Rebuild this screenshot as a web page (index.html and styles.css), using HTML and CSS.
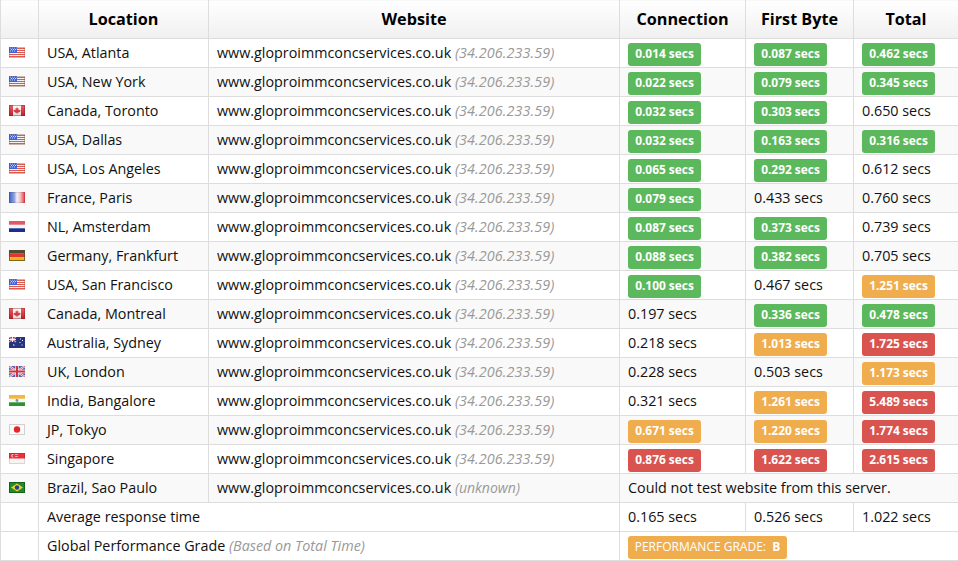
FILE: index.html
```html
<!DOCTYPE html>
<html lang="en">
<head>
<meta charset="utf-8">
<title>Website speed test</title>
<link rel="stylesheet" href="styles.css">
</head>
<body>
<svg class="defs" width="0" height="0" aria-hidden="true">
  <defs>
    <linearGradient id="gloss" x1="0" y1="0" x2="0" y2="1">
      <stop offset="0" stop-color="#fff" stop-opacity=".3"/>
      <stop offset=".5" stop-color="#fff" stop-opacity=".12"/>
      <stop offset="1" stop-color="#000" stop-opacity=".12"/>
    </linearGradient>
    <linearGradient id="sheen" x1="0" y1="0" x2="1" y2="0">
      <stop offset="0" stop-color="#3f5fc8"/>
      <stop offset=".33" stop-color="#8ea2de"/>
      <stop offset=".5" stop-color="#f1f2f8"/>
      <stop offset=".72" stop-color="#f6b9bc"/>
      <stop offset="1" stop-color="#e5343c"/>
    </linearGradient>
    <symbol id="f-us" viewBox="0 0 16 11">
      <rect width="16" height="11" fill="#f6f0f0"/>
      <path d="M0 1.500h16M0 3.500h16M0 5.500h16M0 7.500h16M0 9.500h16" stroke="#dc5a50" stroke-width="1"/>
      <rect width="8" height="6" fill="#3f63dc"/>
      <path d="M1 1h1M3 1h1M5 1h1M7 1h.6M2 2.500h1M4 2.500h1M6 2.500h1M1 4h1M3 4h1M5 4h1" stroke="#eef1ff" stroke-width=".8"/>
      <rect x=".5" y=".5" width="15" height="10" fill="none" stroke="#7a4a3a" stroke-opacity=".35"/>
    </symbol>
    <symbol id="f-ca" viewBox="0 0 16 11">
      <rect width="16" height="11" fill="#f8f2f2"/>
      <rect width="4" height="11" fill="#d2232c"/>
      <rect x="12" width="4" height="11" fill="#d2232c"/>
      <path d="M8 2l.8 1.400.8-.4-.3 2 1-.6.400.8 1-.1-.5 1.400-2 1.300H8.300V9h-.6V7.800H6.800l-2-1.300-.5-1.400 1 .1.400-.8 1 .6-.3-2 .8.400z" fill="#d2232c"/>
      <rect width="16" height="11" fill="url(#gloss)"/>
      <rect x=".5" y=".5" width="15" height="10" fill="none" stroke="#8a1a20" stroke-opacity=".4"/>
    </symbol>
    <symbol id="f-fr" viewBox="0 0 16 11">
      <rect width="16" height="11" fill="url(#sheen)"/>
      <rect x=".5" y=".5" width="15" height="10" fill="none" stroke="#000" stroke-opacity=".1"/>
    </symbol>
    <symbol id="f-nl" viewBox="0 0 16 11">
      <rect width="16" height="11" fill="#f4f4f8"/>
      <rect width="16" height="3.700" fill="#e0434c"/>
      <rect y="7.300" width="16" height="3.700" fill="#1a2f8a"/>
      <rect width="16" height="6" fill="#fff" opacity=".12"/>
    </symbol>
    <symbol id="f-de" viewBox="0 0 16 11">
      <rect width="16" height="3.700" fill="#4a4a44"/>
      <rect y="3.700" width="16" height="3.600" fill="#e0372a"/>
      <rect y="7.300" width="16" height="3.700" fill="#f2b418"/>
      <rect x=".5" y=".5" width="15" height="10" fill="none" stroke="#5a4e20" stroke-opacity=".75"/>
    </symbol>
    <symbol id="f-au" viewBox="0 0 16 11">
      <rect width="16" height="11" fill="#26337e"/>
      <path d="M0 0l7 5M7 0L0 5" stroke="#e8a0a8" stroke-width="1.200"/>
      <path d="M3.500 0v5M0 2.500h7" stroke="#f0f0f0" stroke-width="1.200"/>
      <path d="M11 2h1M13 3.500h1M10.500 5.500h1M12.500 8h1M4 8h1.500" stroke="#f4f4fb" stroke-width="1.200"/>
    </symbol>
    <symbol id="f-uk" viewBox="0 0 16 11">
      <rect width="16" height="11" fill="#5563b0"/>
      <path d="M0 0l16 11M16 0L0 11" stroke="#f2f2f6" stroke-width="2.200"/>
      <path d="M0 0l16 11M16 0L0 11" stroke="#d2404c" stroke-width=".8"/>
      <path d="M8 0v11M0 5.500h16" stroke="#f2f2f6" stroke-width="3.400"/>
      <path d="M8 0v11M0 5.500h16" stroke="#d2323f" stroke-width="2"/>
    </symbol>
    <symbol id="f-in" viewBox="0 0 16 11">
      <rect width="16" height="11" fill="#f8f8f4"/>
      <rect width="16" height="3.700" fill="#f6b445"/>
      <rect y="7.300" width="16" height="3.700" fill="#2d9231"/>
      <circle cx="8" cy="5.500" r="1.400" fill="#7f8fc0"/>
    </symbol>
    <symbol id="f-jp" viewBox="0 0 16 11">
      <rect width="16" height="11" fill="#fafafa"/>
      <circle cx="8" cy="5.500" r="3.200" fill="#e8242b"/>
      <rect x=".5" y=".5" width="15" height="10" fill="none" stroke="#000" stroke-opacity=".16"/>
    </symbol>
    <symbol id="f-sg" viewBox="0 0 16 11">
      <rect width="16" height="11" fill="#f7f3f3"/>
      <rect width="16" height="5.500" fill="#e8313b"/>
      <circle cx="4" cy="2.800" r="1.700" fill="#f7e6e6"/>
      <circle cx="4.800" cy="2.800" r="1.500" fill="#e8313b"/>
      <path d="M6 1.500h3M6 3.500h3" stroke="#f7d0d0" stroke-width=".7"/>
      <rect x=".5" y=".5" width="15" height="10" fill="none" stroke="#000" stroke-opacity=".12"/>
    </symbol>
    <symbol id="f-br" viewBox="0 0 16 11">
      <rect width="16" height="11" fill="#1f8a2a"/>
      <path d="M8 1.500l6 4-6 4-6-4z" fill="#e8d42a"/>
      <circle cx="8" cy="5.500" r="2.200" fill="#2c3f8f"/>
      <rect x=".5" y=".5" width="15" height="10" fill="none" stroke="#0c4a14" stroke-opacity=".6"/>
    </symbol>
  </defs>
</svg>
<table class="results">
  <colgroup>
    <col class="c-flag"><col class="c-loc"><col class="c-site"><col class="c-conn"><col class="c-first"><col class="c-total">
  </colgroup>
  <thead>
    <tr><th></th><th>Location</th><th>Website</th><th>Connection</th><th>First Byte</th><th>Total</th></tr>
  </thead>
  <tbody>
    <tr><td class="flag"><svg><use href="#f-us"/></svg></td><td>USA, Atlanta</td><td>www.gloproimmconcservices.co.uk <em class="ip">(34.206.233.59)</em></td><td><span class="badge good">0.014 secs</span></td><td><span class="badge good">0.087 secs</span></td><td><span class="badge good">0.462 secs</span></td></tr>
    <tr><td class="flag"><svg><use href="#f-us"/></svg></td><td>USA, New York</td><td>www.gloproimmconcservices.co.uk <em class="ip">(34.206.233.59)</em></td><td><span class="badge good">0.022 secs</span></td><td><span class="badge good">0.079 secs</span></td><td><span class="badge good">0.345 secs</span></td></tr>
    <tr><td class="flag"><svg><use href="#f-ca"/></svg></td><td>Canada, Toronto</td><td>www.gloproimmconcservices.co.uk <em class="ip">(34.206.233.59)</em></td><td><span class="badge good">0.032 secs</span></td><td><span class="badge good">0.303 secs</span></td><td>0.650 secs</td></tr>
    <tr><td class="flag"><svg><use href="#f-us"/></svg></td><td>USA, Dallas</td><td>www.gloproimmconcservices.co.uk <em class="ip">(34.206.233.59)</em></td><td><span class="badge good">0.032 secs</span></td><td><span class="badge good">0.163 secs</span></td><td><span class="badge good">0.316 secs</span></td></tr>
    <tr><td class="flag"><svg><use href="#f-us"/></svg></td><td>USA, Los Angeles</td><td>www.gloproimmconcservices.co.uk <em class="ip">(34.206.233.59)</em></td><td><span class="badge good">0.065 secs</span></td><td><span class="badge good">0.292 secs</span></td><td>0.612 secs</td></tr>
    <tr><td class="flag"><svg><use href="#f-fr"/></svg></td><td>France, Paris</td><td>www.gloproimmconcservices.co.uk <em class="ip">(34.206.233.59)</em></td><td><span class="badge good">0.079 secs</span></td><td>0.433 secs</td><td>0.760 secs</td></tr>
    <tr><td class="flag"><svg><use href="#f-nl"/></svg></td><td>NL, Amsterdam</td><td>www.gloproimmconcservices.co.uk <em class="ip">(34.206.233.59)</em></td><td><span class="badge good">0.087 secs</span></td><td><span class="badge good">0.373 secs</span></td><td>0.739 secs</td></tr>
    <tr><td class="flag"><svg><use href="#f-de"/></svg></td><td>Germany, Frankfurt</td><td>www.gloproimmconcservices.co.uk <em class="ip">(34.206.233.59)</em></td><td><span class="badge good">0.088 secs</span></td><td><span class="badge good">0.382 secs</span></td><td>0.705 secs</td></tr>
    <tr><td class="flag"><svg><use href="#f-us"/></svg></td><td>USA, San Francisco</td><td>www.gloproimmconcservices.co.uk <em class="ip">(34.206.233.59)</em></td><td><span class="badge good">0.100 secs</span></td><td>0.467 secs</td><td><span class="badge warn">1.251 secs</span></td></tr>
    <tr><td class="flag"><svg><use href="#f-ca"/></svg></td><td>Canada, Montreal</td><td>www.gloproimmconcservices.co.uk <em class="ip">(34.206.233.59)</em></td><td>0.197 secs</td><td><span class="badge good">0.336 secs</span></td><td><span class="badge good">0.478 secs</span></td></tr>
    <tr><td class="flag"><svg><use href="#f-au"/></svg></td><td>Australia, Sydney</td><td>www.gloproimmconcservices.co.uk <em class="ip">(34.206.233.59)</em></td><td>0.218 secs</td><td><span class="badge warn">1.013 secs</span></td><td><span class="badge bad">1.725 secs</span></td></tr>
    <tr><td class="flag"><svg><use href="#f-uk"/></svg></td><td>UK, London</td><td>www.gloproimmconcservices.co.uk <em class="ip">(34.206.233.59)</em></td><td>0.228 secs</td><td>0.503 secs</td><td><span class="badge warn">1.173 secs</span></td></tr>
    <tr><td class="flag"><svg><use href="#f-in"/></svg></td><td>India, Bangalore</td><td>www.gloproimmconcservices.co.uk <em class="ip">(34.206.233.59)</em></td><td>0.321 secs</td><td><span class="badge warn">1.261 secs</span></td><td><span class="badge bad">5.489 secs</span></td></tr>
    <tr><td class="flag"><svg><use href="#f-jp"/></svg></td><td>JP, Tokyo</td><td>www.gloproimmconcservices.co.uk <em class="ip">(34.206.233.59)</em></td><td><span class="badge warn">0.671 secs</span></td><td><span class="badge warn">1.220 secs</span></td><td><span class="badge bad">1.774 secs</span></td></tr>
    <tr><td class="flag"><svg><use href="#f-sg"/></svg></td><td>Singapore</td><td>www.gloproimmconcservices.co.uk <em class="ip">(34.206.233.59)</em></td><td><span class="badge bad">0.876 secs</span></td><td><span class="badge bad">1.622 secs</span></td><td><span class="badge bad">2.615 secs</span></td></tr>
    <tr><td class="flag"><svg><use href="#f-br"/></svg></td><td>Brazil, Sao Paulo</td><td>www.gloproimmconcservices.co.uk <em class="unknown">(unknown)</em></td><td colspan="3">Could not test website from this server.</td></tr>
    <tr class="plain"><td></td><td colspan="2">Average response time</td><td>0.165 secs</td><td>0.526 secs</td><td>1.022 secs</td></tr>
    <tr class="plain"><td></td><td colspan="2">Global Performance Grade <em>(Based on Total Time)</em></td><td colspan="3" class="grade-cell"><span class="badge grade">PERFORMANCE GRADE: &nbsp;<b>B</b></span></td></tr>
  </tbody>
</table>
</body>
</html>
```
FILE: styles.css
```css
html, body {
  margin: 0;
  padding: 0;
  background: #fff;
}
body {
  font-family: "Open Sans", sans-serif;
  font-size: 14.33px;
  color: #111;
  overflow: hidden;
}
.defs {
  position: absolute;
}
.results {
  border-collapse: collapse;
  table-layout: fixed;
  width: 958px;
  margin-top: -1px;
  line-height: 20px;
}
.c-flag { width: 38px; }
.c-loc { width: 170px; }
.c-site { width: 411px; }
.c-conn { width: 126px; }
.c-first { width: 108px; }
.c-total { width: 105px; }
.results th,
.results td {
  border: 1px solid #ddd;
  padding: 0 8px;
  white-space: nowrap;
  vertical-align: middle;
}
.results th {
  height: 38px;
  font-size: 16.2px;
  font-weight: 700;
  color: #000;
  text-align: center;
  background: linear-gradient(#fff, #f0f0f0);
}
.results td {
  height: 28px;
}
.results tbody tr:nth-child(even) td {
  background: #f9f9f9;
}
.results tbody tr.plain td {
  background: #fff;
}
.results td.flag {
  padding: 0 0 0 8px;
  text-align: left;
  line-height: 0;
}
.flag svg {
  width: 16px;
  height: 11px;
  margin-top: -2px;
}
.results em {
  color: #999;
  font-style: italic;
}
.results em.ip {
  letter-spacing: .11px;
}
.results em.unknown {
  font-size: 14px;
}
.badge {
  display: inline-block;
  width: 73px;
  height: 23px;
  margin: 1px 0 -1px;
  border-radius: 3px;
  color: #fff;
  font-size: 11.9px;
  font-weight: 700;
  line-height: 21px;
  text-align: center;
  vertical-align: middle;
}
.good { background: #5cb85c; }
.warn { background: #f0ad4e; }
.bad { background: #d9534f; }
.badge.grade {
  width: 159px;
  background: #f0ad4e;
  font-size: 12px;
  font-weight: 400;
}
.grade b {
  font-weight: 700;
}
```
